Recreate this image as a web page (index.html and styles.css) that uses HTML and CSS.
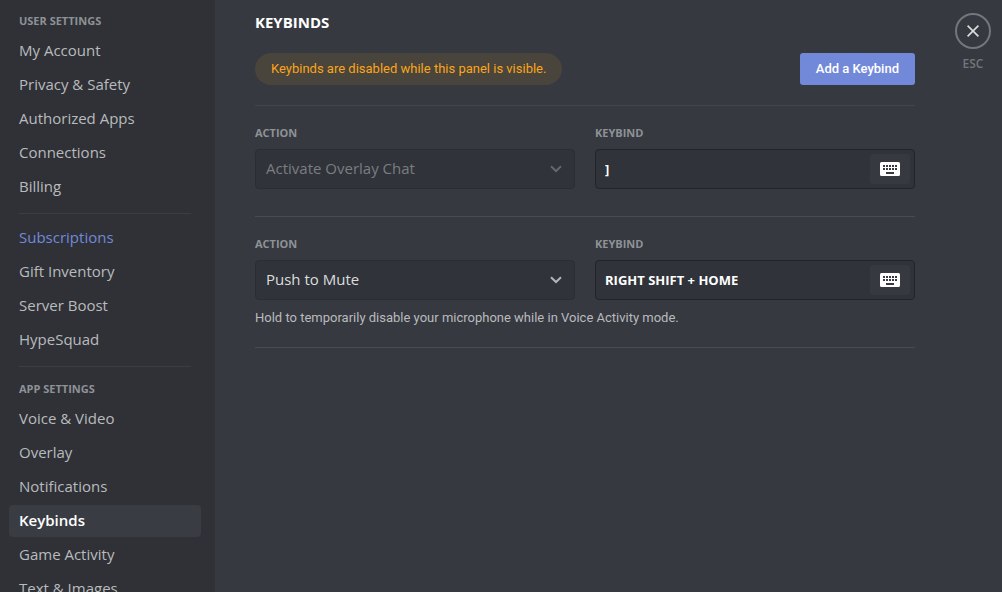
FILE: index.html
```html
<!DOCTYPE html>
<html lang="en">
<head>
<meta charset="utf-8">
<meta name="viewport" content="width=device-width, initial-scale=1">
<title>Keybinds</title>
<link rel="stylesheet" href="styles.css">
</head>
<body>
<div class="app">
  <nav class="sidebar" aria-label="Settings">
    <h2 class="nav-title">USER SETTINGS</h2>
    <ul class="nav-list">
      <li><a class="nav-item" href="#account">My Account</a></li>
      <li><a class="nav-item" href="#privacy">Privacy &amp; Safety</a></li>
      <li><a class="nav-item" href="#apps">Authorized Apps</a></li>
      <li><a class="nav-item" href="#connections">Connections</a></li>
      <li><a class="nav-item" href="#billing">Billing</a></li>
    </ul>
    <hr class="nav-divider">
    <ul class="nav-list">
      <li><a class="nav-item nav-item-accent" href="#subscriptions">Subscriptions</a></li>
      <li><a class="nav-item" href="#gifts">Gift Inventory</a></li>
      <li><a class="nav-item" href="#boost">Server Boost</a></li>
      <li><a class="nav-item" href="#hypesquad">HypeSquad</a></li>
    </ul>
    <hr class="nav-divider">
    <h2 class="nav-title">APP SETTINGS</h2>
    <ul class="nav-list">
      <li><a class="nav-item" href="#voice">Voice &amp; Video</a></li>
      <li><a class="nav-item" href="#overlay">Overlay</a></li>
      <li><a class="nav-item" href="#notifications">Notifications</a></li>
      <li><a class="nav-item nav-item-active" href="#keybinds" aria-current="page">Keybinds</a></li>
      <li><a class="nav-item" href="#activity">Game Activity</a></li>
      <li><a class="nav-item" href="#text">Text &amp; Images</a></li>
    </ul>
  </nav>

  <main class="content">
    <h1 class="page-title">KEYBINDS</h1>
    <div class="toolbar">
      <p class="notice">Keybinds are disabled while this panel is visible.</p>
      <button class="add-button" type="button">Add a Keybind</button>
    </div>

    <section class="bind bind-first">
      <div class="field">
        <label class="label" for="action-1">ACTION</label>
        <div class="select-box select-box-disabled">
          <select class="select" id="action-1" disabled><option>Activate Overlay Chat</option></select>
          <svg class="chevron" viewBox="0 0 12 8" aria-hidden="true"><path d="M1 1.200 6 6l5-4.800"/></svg>
        </div>
      </div>
      <div class="field">
        <label class="label" for="key-1">KEYBIND</label>
        <div class="recorder">
          <input class="recorder-input" id="key-1" type="text" value="]" readonly>
          <button class="recorder-button" type="button" aria-label="Edit keybind">
            <svg class="keyboard" viewBox="0 0 20 14" aria-hidden="true"><path fill-rule="evenodd" d="M1.500 0h17A1.500 1.500 0 0 1 20 1.500v11a1.500 1.500 0 0 1-1.500 1.500h-17A1.500 1.500 0 0 1 0 12.500v-11A1.500 1.500 0 0 1 1.500 0zM3 3v2h2V3zm3 0v2h2V3zm3 0v2h2V3zm3 0v2h2V3zm3 0v2h2V3zM3 6v2h2V6zm3 0v2h2V6zm3 0v2h2V6zm3 0v2h2V6zm3 0v2h2V6zM6 10v2h8v-2z"/></svg>
          </button>
        </div>
      </div>
    </section>

    <section class="bind">
      <div class="field">
        <label class="label" for="action-2">ACTION</label>
        <div class="select-box">
          <select class="select" id="action-2"><option>Push to Mute</option></select>
          <svg class="chevron" viewBox="0 0 12 8" aria-hidden="true"><path d="M1 1.200 6 6l5-4.800"/></svg>
        </div>
      </div>
      <div class="field">
        <label class="label" for="key-2">KEYBIND</label>
        <div class="recorder">
          <input class="recorder-input" id="key-2" type="text" value="RIGHT SHIFT + HOME" readonly>
          <button class="recorder-button" type="button" aria-label="Edit keybind">
            <svg class="keyboard" viewBox="0 0 20 14" aria-hidden="true"><path fill-rule="evenodd" d="M1.500 0h17A1.500 1.500 0 0 1 20 1.500v11a1.500 1.500 0 0 1-1.500 1.500h-17A1.500 1.500 0 0 1 0 12.500v-11A1.500 1.500 0 0 1 1.500 0zM3 3v2h2V3zm3 0v2h2V3zm3 0v2h2V3zm3 0v2h2V3zm3 0v2h2V3zM3 6v2h2V6zm3 0v2h2V6zm3 0v2h2V6zm3 0v2h2V6zm3 0v2h2V6zM6 10v2h8v-2z"/></svg>
          </button>
        </div>
      </div>
      <p class="hint">Hold to temporarily disable your microphone while in Voice Activity mode.</p>
    </section>
  </main>

  <aside class="tools">
    <button class="close" type="button" aria-label="Close settings">
      <svg class="close-icon" viewBox="0 0 12 12" aria-hidden="true"><path d="M.6.6l10.800 10.800M11.400.6.6 11.400"/></svg>
    </button>
    <span class="esc">ESC</span>
  </aside>
</div>
</body>
</html>
```
FILE: styles.css
```css
* {
  box-sizing: border-box;
}

body {
  margin: 0;
  background: #36393f;
  color: #dcddde;
  font-family: "Open Sans", "Noto Sans", sans-serif;
  font-size: 15px;
}

h1, h2, p, ul {
  margin: 0;
  padding: 0;
}

button, input, select {
  margin: 0;
  padding: 0;
  border: 0;
  font: inherit;
  color: inherit;
}

.app {
  display: flex;
  height: 100vh;
  overflow: hidden;
}

.sidebar {
  flex: 0 0 215px;
  padding: 13px 14px 0 9px;
  overflow: hidden;
  background: #2f3136;
}

.nav-title {
  padding: 0 10px 6px;
  color: #8e9297;
  font-size: 11px;
  font-weight: 700;
  line-height: 16px;
}

.nav-list {
  display: grid;
  gap: 2px;
  list-style: none;
}

.nav-item {
  display: block;
  padding: 5px 10px 7px;
  border-radius: 4px;
  color: #b9bbbe;
  line-height: 20px;
  text-decoration: none;
}

.nav-item-accent {
  color: #7289da;
}

.nav-item-active {
  background: #393c43;
  color: #fff;
  font-weight: 600;
}

.nav-divider {
  height: 1px;
  margin: 10px 10px 8px;
  border: 0;
  background: #3b3d42;
}

.nav-divider + .nav-title {
  padding-top: 6px;
}

.content {
  flex: 1;
  min-width: 0;
  padding: 12px 40px 0;
}

.page-title {
  margin-bottom: 21px;
  color: #fff;
  font-size: 15px;
  font-weight: 700;
  line-height: 20px;
}

.toolbar {
  display: flex;
  justify-content: space-between;
  padding-bottom: 20px;
  border-bottom: 1px solid #42454a;
}

.notice {
  padding: 0 16px;
  border-radius: 16px;
  background: #49443c;
  color: #faa61a;
  font-family: Roboto, "Open Sans", sans-serif;
  font-size: 13px;
  line-height: 32px;
}

.add-button {
  padding: 0 16px;
  border-radius: 3px;
  background: #7289da;
  color: #fff;
  font-family: Roboto, "Open Sans", sans-serif;
  font-size: 13px;
  font-weight: 500;
  line-height: 32px;
}

.bind {
  display: grid;
  grid-template-columns: 1fr 1fr;
  column-gap: 20px;
  padding: 19px 0;
  border-bottom: 1px solid #484b51;
}

.bind-first {
  padding-bottom: 27px;
}

.label {
  display: block;
  margin-bottom: 8px;
  color: #8e9297;
  font-size: 11px;
  font-weight: 700;
  line-height: 16px;
}

.select-box {
  position: relative;
  color: #dcddde;
}

.select-box-disabled {
  color: #7b7d82;
}

.select {
  display: block;
  width: 100%;
  height: 40px;
  padding: 0 30px 2px 10px;
  border: 1px solid #2b2d32;
  border-radius: 4px;
  background: #303339;
  color: inherit;
  appearance: none;
  opacity: 1;
}

.chevron {
  position: absolute;
  top: 16px;
  right: 13px;
  width: 12px;
  height: 8px;
  fill: none;
  stroke: #b4b5b8;
  stroke-width: 2;
}

.select-box-disabled .chevron {
  stroke: #65676b;
}

.recorder {
  display: flex;
  height: 40px;
  padding: 4px;
  border: 1px solid #222428;
  border-radius: 4px;
  background: #303339;
}

.recorder-input {
  flex: 1;
  min-width: 0;
  padding-left: 5px;
  background: transparent;
  color: #fff;
  font-size: 13px;
  font-weight: 700;
}

.recorder-button {
  display: flex;
  flex: 0 0 40px;
  align-items: center;
  justify-content: center;
  border-radius: 3px;
  background: #36393f;
}

.keyboard {
  width: 20px;
  height: 14px;
  fill: #fff;
}

.hint {
  grid-column: 1 / -1;
  margin-top: 8px;
  color: #b9bbbe;
  font-family: Roboto, "Open Sans", sans-serif;
  font-size: 13px;
  line-height: 20px;
}

.tools {
  display: flex;
  flex: 0 0 47px;
  flex-direction: column;
  align-items: center;
  padding: 13px 11px 0 0;
}

.close {
  display: flex;
  align-items: center;
  justify-content: center;
  width: 36px;
  height: 36px;
  border: 2px solid #72767d;
  border-radius: 50%;
  background: transparent;
}

.close-icon {
  width: 12px;
  height: 12px;
  fill: none;
  stroke: #dcddde;
  stroke-width: 1.6;
}

.esc {
  margin-top: 7px;
  color: #72767d;
  font-size: 12px;
  font-weight: 600;
  line-height: 16px;
}
```
